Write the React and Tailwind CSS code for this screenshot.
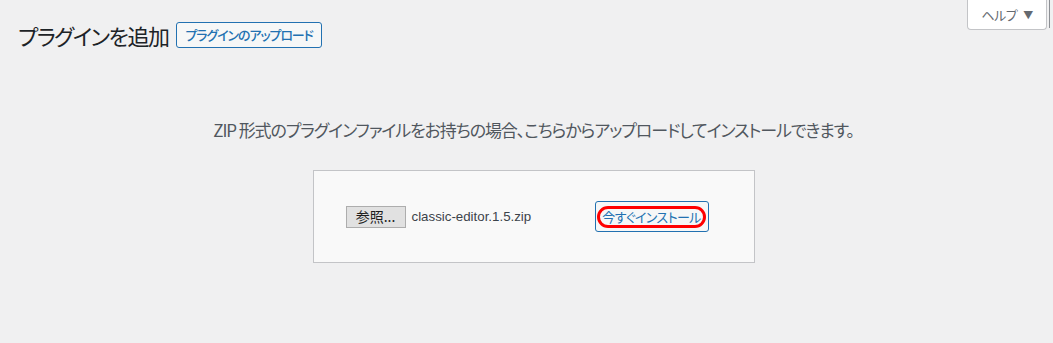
import React from "react";

const jp = "font-['Meiryo_UI','Noto_Sans_CJK_JP',sans-serif] [font-feature-settings:'palt']";

export default function App() {
  return (
    <div className={`relative min-h-[343px] bg-[#f0f0f1] text-[#3c434a] ${jp}`}>
      {/* help tab */}
      <div className="absolute top-0 right-[6px] flex h-[30px] w-[80px] items-center justify-center gap-[6px] rounded-b-[4px] border border-t-0 border-[#c3c4c7] bg-white text-[13px] tracking-[-0.5px] text-[#646970]">
        <span>ヘルプ</span>
        <span className="text-[10px]">▼</span>
      </div>
      <div className="absolute top-0 right-[3px] h-[28px] w-px bg-[#8c8f94]" />

      {/* header */}
      <div className="flex items-center pl-[18px] pt-[22px]">
        <h1 className="text-[22px] font-normal leading-[26px] tracking-[-1.5px] text-[#1d2327]">プラグインを追加</h1>
        <button
          type="button"
          className="ml-[8px] h-[26px] whitespace-nowrap rounded-[3px] border border-[#2271b1] bg-[#f6f7f7] px-[8px] text-[13px] font-medium leading-[24px] tracking-[-1.1px] text-[#2271b1]"
        >
          プラグインのアップロード
        </button>
      </div>

      {/* upload area */}
      <div className="ml-[14px] flex flex-col items-center">
        <p className="mt-[69px] text-center text-[17px] leading-[26px] tracking-[-1.1px] text-[#50575e]">
          ZIP 形式のプラグインファイルをお持ちの場合、こちらからアップロードしてインストールできます。
        </p>

        <form className="mt-[27px] flex w-[442px] items-center border border-[#c3c4c7] bg-[#f9f9f9] p-[30px]">
          <div className="flex w-[251px] items-center">
            <span className="ml-[2px] flex h-[22px] w-[60px] items-center justify-center border border-[#adadad] bg-[#e1e1e1] text-[14px] text-[#1d1d1d]">
              参照...
            </span>
            <span className="ml-[6px] font-['Liberation_Sans',sans-serif] text-[13.3px] text-[#3c434a]">
              classic-editor.1.5.zip
            </span>
          </div>
          <button
            type="button"
            className="flex h-[31px] w-[114px] items-center justify-center whitespace-nowrap rounded-[3px] border border-[#2271b1] bg-[#f6f7f7] text-[13px] tracking-[-0.6px] text-[#2271b1]"
          >
            <span className="rounded-full border-[3px] border-[#ff0000] px-[2px] leading-[16px]">
              今すぐインストール
            </span>
          </button>
        </form>
      </div>
    </div>
  );
}
